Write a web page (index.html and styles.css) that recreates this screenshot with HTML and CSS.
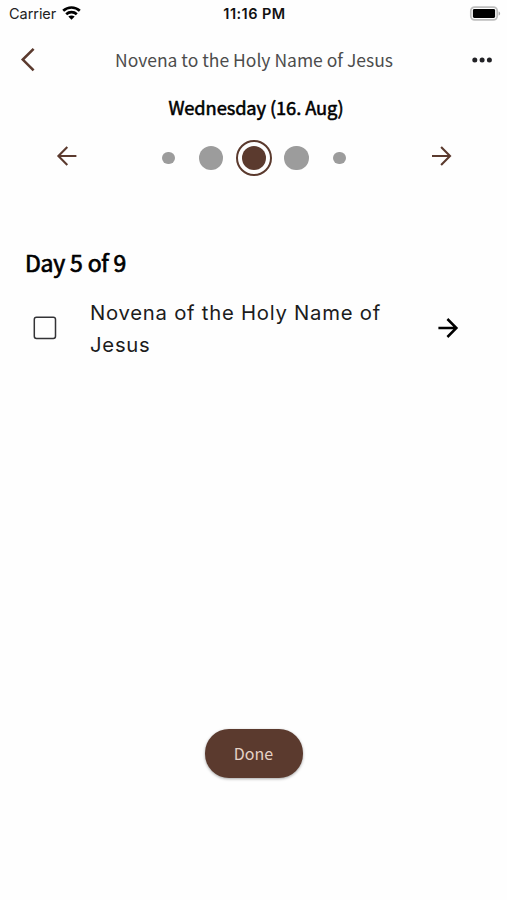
FILE: index.html
```html
<!DOCTYPE html>
<html lang="en">
<head>
<meta charset="utf-8">
<title>Novena to the Holy Name of Jesus</title>
<link rel="stylesheet" href="styles.css">
</head>
<body>
<div class="screen">
  <div class="status">
    <div class="carrier"><span>Carrier</span>
      <svg class="wifi" width="20" height="15" viewBox="0 0 20 15"><g fill="none" stroke="#000" stroke-width="2.7"><path d="M1.2 4.8C6 .4 13 .4 17.8 4.8"/><path d="M4.2 8.3c3-2.8 7.6-2.8 10.6 0"/></g><path d="M9.5 13.8l-3.2-3.2c1.8-1.6 4.6-1.6 6.4 0z"/></svg>
    </div>
    <div class="clock">11:16 PM</div>
    <div class="power">
      <svg width="32" height="16" viewBox="0 0 32 16"><rect x="1.8" y="1.1" width="26.4" height="12.8" rx="3.8" fill="#fff" stroke="#bdbdbd" stroke-width="1.7"/><rect x="3.9" y="3" width="22.2" height="9" rx="1.4"/><path d="M29.6 5.4c2 .7 2 3.5 0 4.2z" fill="#aaa"/></svg>
    </div>
  </div>
  <header class="header">
    <svg class="back" width="18" height="26" viewBox="0 0 18 26"><path d="M14.6 1.8L3.8 12.6l10.8 10.8" fill="none" stroke="#5b3a2e" stroke-width="2.6"/></svg>
    <h1 class="title">Novena to the Holy Name of Jesus</h1>
    <svg class="more" width="22" height="6" viewBox="0 0 22 6" fill="#222226"><circle cx="3.8" cy="3" r="2.5"/><circle cx="11.1" cy="3" r="2.5"/><circle cx="18.4" cy="3" r="2.5"/></svg>
  </header>
  <h2 class="date"><span>Wednesday (16. Aug)</span></h2>
  <nav class="days">
    <svg class="prev" width="22" height="22" viewBox="0 0 22 22"><path d="M21.4 11H3.4M12.3 2.1L3.4 11l8.9 8.9" fill="none" stroke="#5b3a2e" stroke-width="2.1"/></svg>
    <div class="dots">
      <i class="dot small"></i><i class="dot"></i><i class="ring"><i class="dot current"></i></i><i class="dot"></i><i class="dot small"></i>
    </div>
    <svg class="next" width="22" height="22" viewBox="0 0 22 22"><path d="M2 11h18M11.1 2.1L20 11l-8.9 8.9" fill="none" stroke="#5b3a2e" stroke-width="2.1"/></svg>
  </nav>
  <h2 class="count"><span>Day 5 of 9</span></h2>
  <div class="item">
    <svg class="box" width="24" height="24" viewBox="0 0 24 24"><rect x="1.3" y="1.3" width="21.2" height="21.2" rx="2.2" fill="none" stroke="#333336" stroke-width="1.5"/></svg>
    <p class="label">Novena of the Holy Name of Jesus</p>
    <svg class="open" width="22" height="22" viewBox="0 0 22 22"><path d="M1.4 11h18M10.4 2l9 9-9 9" fill="none" stroke="#000" stroke-width="2.5"/></svg>
  </div>
  <button class="done"><span>Done</span></button>
</div>
</body>
</html>
```
FILE: styles.css
```css
* { box-sizing: border-box; }
body { margin: 0; background: #fefefe; }
.screen {
  width: 507px; height: 900px; overflow: hidden;
  display: flex; flex-direction: column;
  font-family: "Noto Sans CJK SC", "Open Sans", sans-serif; color: #000;
}
.status {
  height: 28px; flex: none; padding: 0 6px 0 9px;
  display: grid; grid-template-columns: 1fr auto 1fr; align-items: center;
  font: 14.5px/28px Inter, sans-serif;
}
.carrier { display: flex; align-items: center; gap: 6px; color: #222; letter-spacing: -.05px; }
.wifi { margin-bottom: 2px; }
.clock { font-weight: 600; font-size: 14.5px; letter-spacing: .45px; color: #111; margin-right: 1px; }
.power { display: flex; justify-content: flex-end; }
.header {
  height: 63px; flex: none; padding: 0 14px 0 19px;
  display: flex; align-items: center; justify-content: space-between;
}
.title { margin: 0; font-size: 17.5px; line-height: 26px; font-weight: 400; color: #4c4c4c; white-space: nowrap; }
.date {
  margin: 2px 0 0; padding-left: 5px; height: 28px; flex: none;
  font-size: 18.3px; line-height: 28px; font-weight: 400; text-align: center;
  letter-spacing: -.1px; -webkit-text-stroke: .55px #000;
}
.days {
  height: 40px; flex: none; margin-top: 17px; padding: 0 55px;
  display: flex; align-items: center; justify-content: space-between;
}
.prev, .next { margin-bottom: 5px; }
.dots { display: grid; grid-template-columns: repeat(5, 42.8px); place-items: center; margin-left: 1px; }
.dot { display: block; width: 24.6px; height: 24.6px; border-radius: 50%; background: #9c9c9c; }
.small { width: 12.6px; height: 12.6px; }
.ring { display: grid; place-items: center; width: 36px; height: 36px; border: 2px solid #5b3a2e; border-radius: 50%; }
.current { background: #5b3a2e; }
.count {
  margin: 66px 0 0 25px; height: 36px; flex: none;
  font-size: 23px; line-height: 36px; font-weight: 400;
  letter-spacing: -.2px; -webkit-text-stroke: .7px #000;
}
.item { height: 64px; flex: none; margin-top: 16px; padding: 0 48px 0 33px; display: flex; align-items: center; }
.box { flex: none; }
.label { width: 310px; margin: 2px 0 0 33px; font: 20.3px/32px Inter, sans-serif; letter-spacing: .75px; color: #1c1c1c; }
.open { margin-left: auto; }
.done {
  width: 98px; height: 49px; flex: none; margin: 369px auto 0; padding: 0; border: 0; border-radius: 24px;
  background: #5b3a2e; color: #e6d2c6; font: 16px/49px "Noto Sans CJK SC", sans-serif;
  box-shadow: 0 1px 3px rgba(0, 0, 0, .35);
}
```
